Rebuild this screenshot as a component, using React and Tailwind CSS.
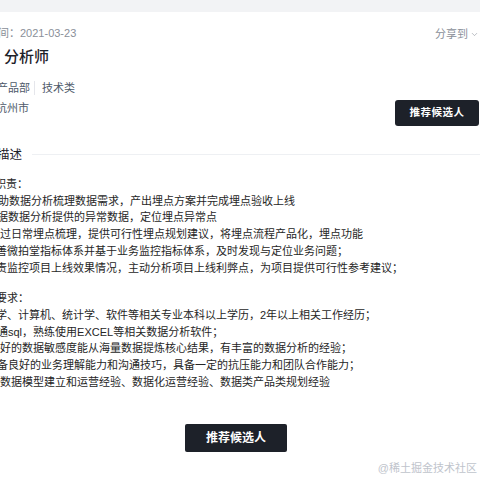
import { ChevronDown } from "lucide-react";

const DUTIES = [
  { text: "助数据分析梳理数据需求，产出埋点方案并完成埋点验收上线", shift: "-ml-[2px]" },
  { text: "据数据分析提供的异常数据，定位埋点异常点", shift: "-ml-[3px]" },
  { text: "过日常埋点梳理，提供可行性埋点规划建议，将埋点流程产品化，埋点功能", shift: "ml-0" },
  { text: "善微拍堂指标体系并基于业务监控指标体系，及时发现与定位业务问题；", shift: "-ml-[4px]" },
  { text: "责监控项目上线效果情况，主动分析项目上线利弊点，为项目提供可行性参考建议；", shift: "-ml-[4px]" },
];

const REQUIREMENTS = [
  { text: "学、计算机、统计学、软件等相关专业本科以上学历，2年以上相关工作经历；", shift: "-ml-[4px]" },
  { text: "通sql，熟练使用EXCEL等相关数据分析软件；", shift: "-ml-[3px]" },
  { text: "好的数据敏感度能从海量数据提炼核心结果，有丰富的数据分析的经验；", shift: "ml-0" },
  { text: "备良好的业务理解能力和沟通技巧，具备一定的抗压能力和团队合作能力；", shift: "-ml-[3px]" },
  { text: "数据模型建立和运营经验、数据化运营经验、数据类产品类规划经验", shift: "ml-0" },
];

function Line({ text, shift }) {
  return <div className={`whitespace-nowrap ${shift}`}>{text}</div>;
}

export default function App() {
  return (
    <div className="relative w-[480px] h-[480px] overflow-hidden bg-white font-['Liberation_Sans','Noto_Sans_CJK_SC',sans-serif] text-[#262626]">
      <div className="h-[12px] bg-[#f2f3f5]" />

      <div className="flex justify-between items-start">
        <div>
          <div className="mt-[13px] -ml-[2px] text-[11px] leading-[16px] text-[#8a8f99] whitespace-nowrap">
            间：2021-03-23
          </div>
          <div className="mt-[4px] ml-[4px] text-[15px] leading-[24px] font-medium text-[#1d2129]">
            分析师
          </div>
          <div className="mt-[11px] -ml-[3px] flex items-center text-[11px] leading-[16px] text-[#4e5969]">
            <span>产品部</span>
            <span className="w-px h-[14px] bg-[#e5e6eb] ml-[4px] mr-[7px]" />
            <span>技术类</span>
          </div>
          <div className="mt-[4px] -ml-[4px] text-[11px] leading-[16px] text-[#4e5969]">杭州市</div>
        </div>

        <div className="flex flex-col items-end pr-[1px]">
          <div className="mt-[14px] flex items-center gap-[2px] text-[11px] leading-[16px] text-[#8a8f99]">
            分享到
            <ChevronDown size={9} strokeWidth={1.5} />
          </div>
          <button className="mt-[58px] w-[84px] h-[26px] rounded-[3px] bg-[#1d2129] text-white text-[10.5px] font-bold tracking-[0.5px]">
            推荐候选人
          </button>
        </div>
      </div>

      <div className="mt-[20px] flex items-center -ml-[3px]">
        <span className="text-[12.5px] leading-[18px] text-[#1d2129] whitespace-nowrap">描述</span>
        <div className="flex-1 h-px bg-[#eef0f3] ml-[10px] -mt-[2px]" />
      </div>

      <div className="mt-[12px] text-[11px] leading-[16.7px]">
        <div className="mb-[14px]">
          <div className="-ml-[5px]">职责：</div>
          {DUTIES.map((d) => (
            <Line key={d.text} {...d} />
          ))}
        </div>
        <div>
          <div className="-ml-[4px]">要求：</div>
          {REQUIREMENTS.map((r) => (
            <Line key={r.text} {...r} />
          ))}
        </div>
      </div>

      <div className="mt-[34px] flex justify-center pr-[8px]">
        <button className="w-[102px] h-[28px] rounded-[2px] bg-[#1d2129] text-white text-[12px] font-bold">
          推荐候选人
        </button>
      </div>

      <div className="absolute right-[3px] bottom-[4px] text-[11px] leading-[16px] text-[#c0c4cc]">
        @稀土掘金技术社区
      </div>
    </div>
  );
}
